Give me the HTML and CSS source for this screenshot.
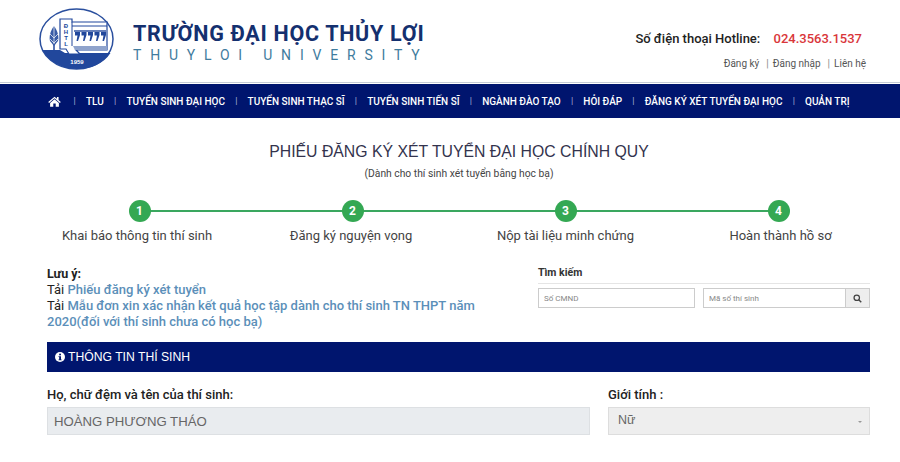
FILE: index.html
```html
<!DOCTYPE html>
<html lang="vi">
<head>
  <meta charset="UTF-8">
  <meta name="viewport" content="width=device-width, initial-scale=1.0">
  <title>Phiếu đăng ký xét tuyển</title>
  <link rel="stylesheet" href="styles.css">
</head>
<body>
<header class="top-header">
  <div class="brand">
    <svg class="logo" viewBox="0 0 75 62" width="75" height="62">
      <ellipse cx="37.5" cy="31" rx="36.5" ry="30" fill="#fff" stroke="#2a4f9e" stroke-width="1.5"/>
      <path d="M3.5 42 H21 L26 45 H71.5 A36.5 30 0 0 1 37.5 61 A36.5 30 0 0 1 3.5 42 Z" fill="#21479c"/>
      <path d="M21 41 V11 H33 V14 H68 V42 H37 L41 46 H30 L27 41 Z" fill="#fff" stroke="#21479c" stroke-width="1.2"/>
      <path d="M33 14 V38" stroke="#21479c" stroke-width="1"/>
      <path d="M33 18 H68" stroke="#21479c" stroke-width="1"/>
      <path d="M35 23 H67" stroke="#21479c" stroke-width="1.4"/>
      <path d="M36 24 H41 V27 L39 33 H37.5 L38.5 27.5 H36 Z M42.5 24 H47.5 V27 L45.5 33 H44 L45 27.5 H42.5 Z M49 24 H54 V27 L52 33 H50.5 L51.5 27.5 H49 Z M55.5 24 H60.5 V27 L58.5 33 H57 L58 27.5 H55.5 Z M62 24 H67 V27 L65 33 H63.5 L64.5 27.5 H62 Z" fill="#21479c"/>
      <path d="M34 38 H68 V42 H36 Z" fill="#8fa3cc"/>
      <path d="M15 18 C11 23 10 29 11 33 L15 38 L19 33 C20 29 19 23 15 18 Z" fill="#3a5ca6"/>
      <path d="M15 18 V42 M11 26 L15 30 L19 26 M11 31 L15 35 L19 31" stroke="#fff" stroke-width="0.7" fill="none"/>
      <path d="M15 36 V43" stroke="#21479c" stroke-width="1.5"/>
      <text x="38" y="56" class="logo-year" text-anchor="middle">1959</text>
      <text x="27" y="20" class="logo-letter" text-anchor="middle">Đ</text>
      <text x="27" y="26" class="logo-letter" text-anchor="middle">H</text>
      <text x="27" y="32" class="logo-letter" text-anchor="middle">T</text>
      <text x="27" y="38" class="logo-letter" text-anchor="middle">L</text>
    </svg>
    <div class="brand-text">
      <div class="brand-vi">TRƯỜNG ĐẠI HỌC THỦY LỢI</div>
      <div class="brand-en">THUYLOI UNIVERSITY</div>
    </div>
  </div>
  <div class="header-right">
    <div class="hotline">Số điện thoại Hotline: <span class="hotline-num">024.3563.1537</span></div>
    <div class="user-links"><a href="#">Đăng ký</a><span class="sep">|</span><a href="#">Đăng nhập</a><span class="sep">|</span><a href="#">Liên hệ</a></div>
  </div>
</header>

<nav class="main-nav">
  <a href="#" class="home-link" aria-label="Trang chủ">
    <svg viewBox="0 0 16 13" width="13" height="11"><path d="M8 0.5 L0.3 7 L1.3 8.2 L8 2.6 L14.7 8.2 L15.7 7 L13 4.7 V1 H11 V3 Z M8 3.8 L2.6 8.3 V13 H6.5 V9 H9.5 V13 H13.4 V8.3 Z" fill="#fff"/></svg>
  </a>
  <span class="sep">|</span><a href="#">TLU</a>
  <span class="sep">|</span><a href="#">TUYỂN SINH ĐẠI HỌC</a>
  <span class="sep">|</span><a href="#">TUYỂN SINH THẠC SĨ</a>
  <span class="sep">|</span><a href="#">TUYỂN SINH TIẾN SĨ</a>
  <span class="sep">|</span><a href="#">NGÀNH ĐÀO TẠO</a>
  <span class="sep">|</span><a href="#">HỎI ĐÁP</a>
  <span class="sep">|</span><a href="#">ĐĂNG KÝ XÉT TUYỂN ĐẠI HỌC</a>
  <span class="sep">|</span><a href="#">QUẢN TRỊ</a>
</nav>

<main>
  <h1 class="page-title">PHIẾU ĐĂNG KÝ XÉT TUYỂN ĐẠI HỌC CHÍNH QUY</h1>
  <p class="page-sub">(Dành cho thí sinh xét tuyển bằng học bạ)</p>

  <div class="steps">
    <div class="step"><span class="step-num">1</span><span class="step-label">Khai báo thông tin thí sinh</span></div>
    <div class="step"><span class="step-num">2</span><span class="step-label">Đăng ký nguyện vọng</span></div>
    <div class="step"><span class="step-num">3</span><span class="step-label">Nộp tài liệu minh chứng</span></div>
    <div class="step"><span class="step-num">4</span><span class="step-label">Hoàn thành hồ sơ</span></div>
  </div>

  <div class="content">
    <div class="note-row">
      <div class="note">
        <strong>Lưu ý:</strong><br>
        Tải <a href="#">Phiếu đăng ký xét tuyển</a><br>
        Tải <a href="#">Mẫu đơn xin xác nhận kết quả học tập dành cho thí sinh TN THPT năm</a><br>
        <a href="#">2020(đối với thí sinh chưa có học bạ)</a>
      </div>
      <div class="search">
        <div class="search-title">Tìm kiếm</div>
        <div class="search-fields">
          <input type="text" class="search-input" placeholder="Số CMND">
          <div class="search-group">
            <input type="text" class="search-input" placeholder="Mã số thí sinh">
            <button type="button" class="search-btn" aria-label="Tìm kiếm">
              <svg viewBox="0 0 12 12" width="9" height="9"><circle cx="5" cy="5" r="3.6" fill="none" stroke="#444" stroke-width="1.7"/><path d="M7.7 7.7 L11 11" stroke="#444" stroke-width="1.9"/></svg>
            </button>
          </div>
        </div>
      </div>
    </div>

    <div class="panel-title">
      <svg viewBox="0 0 12 12" width="10" height="10"><circle cx="6" cy="6" r="6" fill="#fff"/><rect x="5" y="2" width="2.2" height="2" fill="#00156e"/><path d="M4.2 5 H7.2 V9 H8 V10 H4.2 V9 H5 V6 H4.2 Z" fill="#00156e"/></svg>
      THÔNG TIN THÍ SINH
    </div>

    <div class="form-row">
      <div class="form-group name-group">
        <label for="fullname">Họ, chữ đệm và tên của thí sinh:</label>
        <input type="text" id="fullname" value="HOÀNG PHƯƠNG THÁO" disabled>
      </div>
      <div class="form-group gender-group">
        <label for="gender">Giới tính :</label>
        <div class="select-box" id="gender">Nữ<span class="caret"></span></div>
      </div>
    </div>
  </div>
</main>
</body>
</html>
```

FILE: styles.css
```css
body {
  font-family: Roboto, "Liberation Sans", sans-serif;
  margin: 0;
  padding: 0;
  background-color: white;
  color: #222;
  overflow: hidden;
}

a {
  text-decoration: none;
}

.top-header {
  display: flex;
  justify-content: space-between;
  height: 83px;
  box-sizing: border-box;
  padding: 8px 34px 0 39px;
  border-bottom: 1px solid #c5ccd6;
}
.brand {
  display: flex;
  gap: 19px;
}
.logo {
  display: block;
}
.logo-year {
  font: bold 6px "Liberation Sans", sans-serif;
  fill: #fff;
}
.logo-letter {
  font: bold 6px "Liberation Sans", sans-serif;
  fill: #21479c;
}
.brand-vi {
  margin-top: 13px;
  font-size: 21.5px;
  line-height: 26px;
  font-weight: 700;
  letter-spacing: 0.7px;
  color: #14306f;
}
.brand-en {
  margin-top: 1px;
  font-size: 14px;
  line-height: 14px;
  letter-spacing: 8.8px;
  color: #3f7c9e;
}
.header-right {
  text-align: right;
}
.hotline {
  margin-top: 23px;
  font-size: 13px;
  font-weight: 500;
  line-height: 16px;
  color: #222;
}
.hotline-num {
  margin-left: 10px;
  margin-right: 4px;
  color: #d9363a;
  font-size: 13px;
}
.user-links {
  margin-top: 10px;
  font-size: 10px;
  line-height: 14px;
  color: #666;
}
.user-links a {
  color: #555;
}
.user-links .sep {
  margin: 0 4px 0 7px;
  color: #888;
}

.main-nav {
  display: flex;
  align-items: center;
  justify-content: center;
  height: 34px;
  margin-top: 1px;
  padding-right: 2px;
  background-color: #00156e;
  color: white;
}
.main-nav a {
  color: white;
  font-size: 10px;
  font-weight: 500;
  white-space: nowrap;
}
.main-nav .sep {
  margin: 0 10.2px;
  font-size: 9px;
  color: #aab3d6;
}
.home-link {
  display: flex;
  margin-right: 2px;
}

.page-title {
  margin: 25px 0 0;
  padding-left: 18px;
  font-family: "Liberation Sans", sans-serif;
  font-size: 15.8px;
  font-weight: 400;
  line-height: 18px;
  text-align: center;
  color: #33334d;
}
.page-sub {
  margin: 7px 0 0;
  padding-left: 18px;
  font-size: 10.3px;
  line-height: 12px;
  text-align: center;
  color: #444;
}

.steps {
  display: grid;
  grid-template-columns: repeat(4, 213px);
  margin: 20px 0 0 33px;
}
.step {
  position: relative;
  display: flex;
  flex-direction: column;
  align-items: center;
}
.step:not(:last-child)::after {
  content: "";
  position: absolute;
  top: 10px;
  left: 50%;
  width: 100%;
  height: 2px;
  background-color: #3aa75f;
}
.step-num {
  position: relative;
  z-index: 1;
  width: 22px;
  height: 22px;
  border-radius: 50%;
  background-color: #34a853;
  color: white;
  font-size: 12px;
  font-weight: 700;
  line-height: 22px;
  text-align: center;
}
.step-label {
  margin-top: 6px;
  font-size: 13px;
  line-height: 16px;
  color: #444;
}
.step:nth-child(1) .step-label {
  margin-right: 5px;
}
.step:nth-child(2) .step-label {
  margin-right: 3px;
}
.step:nth-child(4) .step-label {
  margin-left: 4px;
}

.content {
  padding: 0 30px 0 47px;
}
.note-row {
  display: flex;
  justify-content: space-between;
  margin-top: 22px;
}
.note {
  width: 432px;
  font-size: 13px;
  line-height: 16px;
}
.note strong {
  font-weight: 700;
  font-size: 12.5px;
}
.note a {
  color: #5b8fb9;
  font-weight: 500;
}
.search {
  width: 332px;
  padding-top: 1px;
}
.search-title {
  font-size: 10.5px;
  font-weight: 700;
  line-height: 12px;
  padding-bottom: 4px;
  border-bottom: 1px solid #e5e5e5;
  color: #333;
}
.search-fields {
  display: flex;
  gap: 8px;
  margin-top: 4px;
}
.search-fields > input {
  width: 157px;
}
.search-group {
  display: flex;
  flex: 1;
}
.search-input {
  box-sizing: border-box;
  width: 100%;
  min-width: 0;
  height: 20px;
  padding: 0 5px;
  border: 1px solid #ccc;
  font-family: inherit;
  font-size: 8px;
}
.search-input::placeholder {
  color: #888;
}
.search-btn {
  display: flex;
  align-items: center;
  justify-content: center;
  flex: none;
  width: 24px;
  height: 20px;
  padding: 0;
  border: 1px solid #ccc;
  border-left: none;
  background-color: #eee;
}

.panel-title {
  display: flex;
  align-items: center;
  gap: 3px;
  height: 30px;
  margin-top: 12px;
  padding-left: 8px;
  background-color: #00156e;
  color: white;
  font-family: "Liberation Sans", sans-serif;
  font-size: 12.2px;
}

.form-row {
  display: flex;
  justify-content: space-between;
  margin-top: 15px;
}
.form-group label {
  display: block;
  margin-bottom: 5px;
  font-size: 13px;
  font-weight: 500;
  line-height: 15px;
}
.name-group {
  width: 543px;
}
.gender-group {
  width: 262px;
}
.name-group input {
  box-sizing: border-box;
  width: 100%;
  height: 28px;
  padding: 0 6px;
  border: 1px solid #dde0e3;
  background-color: #e9ecef;
  color: #666;
  font-family: "Liberation Sans", sans-serif;
  font-size: 13.2px;
}
.select-box {
  position: relative;
  box-sizing: border-box;
  height: 28px;
  padding: 3px 9px;
  border: 1px solid #ddd;
  background-color: #eee;
  color: #666;
  font-family: "Liberation Sans", sans-serif;
  font-size: 12.5px;
  line-height: 18px;
}
.caret {
  position: absolute;
  top: 13px;
  right: 7px;
  border-top: 2px solid #999;
  border-left: 2px solid transparent;
  border-right: 2px solid transparent;
}
```
